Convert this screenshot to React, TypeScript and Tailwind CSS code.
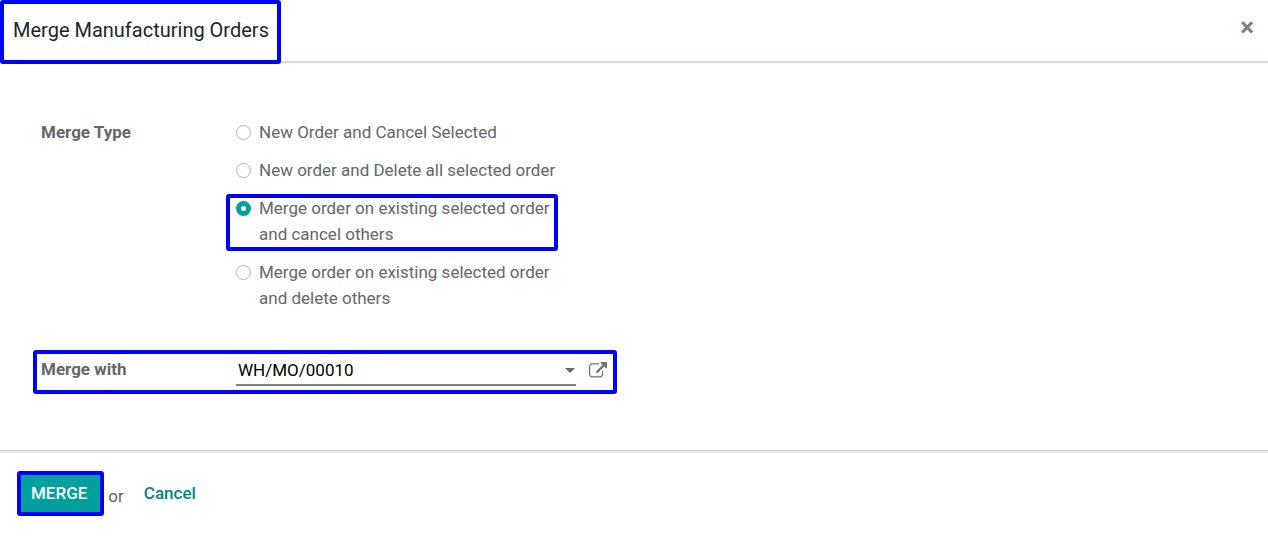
import { useState } from "react";

const mergeTypes = [
  "New Order and Cancel Selected",
  "New order and Delete all selected order",
  "Merge order on existing selected order and cancel others",
  "Merge order on existing selected order and delete others",
];

function ExternalLinkIcon() {
  return (
    <svg viewBox="0 0 1792 1792" className="size-[18px] fill-current" aria-hidden="true">
      <path d="M1408 928v320q0 119-84.5 203.5t-203.5 84.5h-832q-119 0-203.5-84.5t-84.5-203.5v-832q0-119 84.5-203.5t203.5-84.5h704q14 0 23 9t9 23v64q0 14-9 23t-23 9h-704q-66 0-113 47t-47 113v832q0 66 47 113t113 47h832q66 0 113-47t47-113v-320q0-14 9-23t23-9h64q14 0 23 9t9 23zm384-864v512q0 26-19 45t-45 19-45-19l-176-176-652 652q-10 10-23 10t-23-10l-114-114q-10-10-10-23t10-23l652-652-176-176q-19-19-19-45t19-45 45-19h512q26 0 45 19t19 45z" />
    </svg>
  );
}

export default function App() {
  const [selected, setSelected] = useState(2);

  return (
    <div className="min-h-screen bg-white font-['Roboto',sans-serif] text-[17px] leading-[26px] text-[#666666]">
      <header className="flex items-start justify-between border-b-2 border-[#d3d9de]">
        <h1 className="relative -mb-[3px] rounded-[3px] border-4 border-[#0000ff] bg-white pt-[11px] pr-2 pb-[15px] pl-[9px] text-[20px] leading-[30px] text-[#212529]">
          Merge Manufacturing Orders
        </h1>
        <button
          type="button"
          aria-label="Close"
          className="mt-[14px] mr-[14px] text-[26px] leading-[26px] font-bold text-[#7f7f7f]"
        >
          ×
        </button>
      </header>

      <main className="px-[33px] pt-14 pb-14">
        <fieldset className="flex pl-2" aria-labelledby="merge-type">
          <div id="merge-type" className="w-[195px] shrink-0 font-bold">
            Merge Type
          </div>
          <div className="flex w-[340px] flex-col gap-3">
            {mergeTypes.map((label, i) => (
              <label key={label} className="relative flex items-start gap-2">
                <input
                  type="radio"
                  name="mergeType"
                  checked={selected === i}
                  onChange={() => setSelected(i)}
                  className="mt-[6px] size-[15px] shrink-0 appearance-none rounded-full border border-[#adb5bd] bg-white checked:border-[5px] checked:border-[#00a09d]"
                />
                <span>{label}</span>
                {i === 2 && (
                  <span className="pointer-events-none absolute -top-px right-[18px] -bottom-1 -left-[10px] rounded-[3px] border-4 border-[#0000ff]" />
                )}
              </label>
            ))}
          </div>
        </fieldset>

        <div className="mt-[39px] flex h-11 w-fit items-start rounded-[3px] border-4 border-[#0000ff] pr-1.5 pl-1">
          <label htmlFor="merge-with" className="mt-0.5 w-[195px] shrink-0 font-bold">
            Merge with
          </label>
          <div className="relative w-[340px]">
            <select
              id="merge-with"
              className="h-8 w-full appearance-none border-b-2 border-[#808080] bg-white pt-0.5 pl-0.5 text-black"
            >
              <option>WH/MO/00010</option>
            </select>
            <svg
              viewBox="0 0 10 5"
              className="pointer-events-none absolute top-[14px] right-px h-[5px] w-[10px] fill-[#666666]"
              aria-hidden="true"
            >
              <path d="M0 0h10L5 5z" />
            </svg>
          </div>
          <button type="button" aria-label="External link" className="mt-2 ml-[13px] text-[#6c757d]">
            <ExternalLinkIcon />
          </button>
        </div>
      </main>

      <footer className="border-t border-[#cdd2d8]">
        <div className="flex items-start border-t-2 border-[#e6e9ec] pt-[18px] pl-[17px]">
          <button
            type="button"
            className="h-[45px] rounded-[3px] border-4 border-[#0000ff] bg-[#00a09d] pr-[13px] pb-0.5 pl-[10px] font-medium text-white"
          >
            MERGE
          </button>
          <span className="mt-3 ml-1">or</span>
          <button type="button" className="mt-[9px] ml-5 font-medium text-[#008784]">
            Cancel
          </button>
        </div>
      </footer>
    </div>
  );
}
